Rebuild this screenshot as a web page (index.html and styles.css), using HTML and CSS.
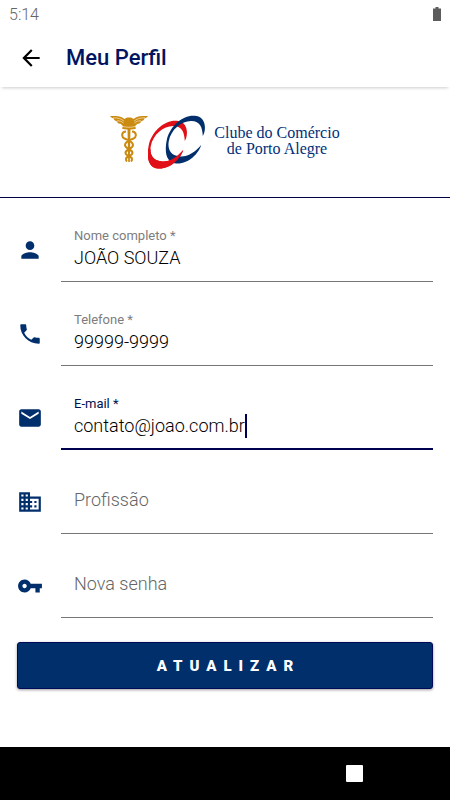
FILE: index.html
```html
<!DOCTYPE html>
<html lang="pt-BR">
<head>
<meta charset="utf-8">
<meta name="viewport" content="width=device-width, initial-scale=1">
<title>Meu Perfil</title>
<link rel="stylesheet" href="styles.css">
</head>
<body>
<div class="status-bar">
  <span>5:14</span>
  <svg class="battery" viewBox="0 0 8 14" aria-hidden="true"><path d="M2.5 0h3v1.5H8V14H0V1.5h2.5z"/></svg>
</div>
<header class="app-bar">
  <button class="back" type="button" aria-label="Voltar">
    <svg class="icon" viewBox="0 0 24 24"><path d="M20 11H7.83l5.59-5.59L12 4l-8 8 8 8 1.41-1.41L7.83 13H20v-2z"/></svg>
  </button>
  <h1>Meu Perfil</h1>
</header>
<main>
  <div class="brand">
    <svg class="caduceus" viewBox="0 0 38 46" aria-hidden="true">
      <path d="M0 0c5-.2 11-.2 14.500 3C16 1.800 17 1.500 19 1.500s3 .3 4.500 1.500C27-.2 33-.2 38 0c-1 1.500-2.500 2.200-4 2.500.5.600.2 1.200-.6 1.800-.9.700-1.800.9-2.600 1.200.2 1-.5 1.600-1.400 2-.9.400-1.800.4-2.600.5-.2 1-1 1.600-1.800 1.900l1 2.600c-2 1.400-12 1.400-14 0l1-2.600c-.8-.3-1.600-.9-1.800-1.900-.8-.1-1.700-.1-2.600-.5-.9-.4-1.600-1-1.400-2-.8-.3-1.700-.5-2.600-1.200C3.800 3.700 3.500 3.100 4 2.500 2.500 2.200 1 1.500 0 0z"/>
      <path class="wing-line" d="M3 1.800c5 .1 8.500.9 11 3.500M7 4.800c3-.1 4.500.6 6.500 2.200M35 1.800c-5 .1-8.500.9-11 3.500M31 4.800c-3-.1-4.500.6-6.500 2.200M13 10.500c3 1 9 1 12 0"/>
      <path d="M17.500 12h3l-.7 34h-1.600z"/>
      <path class="snake" d="M16 15.500c-4.500 0-5 5.500-1.500 7 4 1.500 8.500 3 8.500 6.500 0 4-7.500 4-7.500 8 0 3 6.500 3 6.500 6 0 1-.5 2-1 2.500M22 15.500c4.500 0 5 5.500 1.500 7-4 1.500-8.500 3-8.500 6.500 0 4 7.500 4 7.500 8 0 3-6.500 3-6.500 6 0 1 .5 2 1 2.500"/>
    </svg>
    <svg class="rings" viewBox="0 0 58 54" aria-hidden="true">
      <defs>
        <path id="ring" d="M36.800 26C40.500 20 40 7.500 30.500 6 19 3.500 5.500 14 1.200 28-2 42 0 52.500 10 53.500 22 54.500 32.500 44 35.200 35 29 42 22 46.800 14.500 46.500 4.500 46 1.500 39 2.700 31.500 5 19 16 10.700 25.500 11c8.500.2 10.800 6 11.300 15z"/>
        <clipPath id="front"><rect x="0" y="34" width="58" height="20"/></clipPath>
      </defs>
      <use class="red" href="#ring"/>
      <use class="blue" href="#ring" x="18" y="-5"/>
      <use class="red" href="#ring" clip-path="url(#front)"/>
    </svg>
    <p class="brand-name">Clube do Comércio<br>de Porto Alegre</p>
  </div>
  <form class="profile">
    <div class="row">
      <svg class="icon" viewBox="0 0 24 24" aria-hidden="true"><path d="M12 12c2.210 0 4-1.790 4-4s-1.790-4-4-4-4 1.790-4 4 1.790 4 4 4zm0 2c-2.670 0-8 1.340-8 4v2h16v-2c0-2.660-5.330-4-8-4z"/></svg>
      <div class="field">
        <label for="nome">Nome completo *</label>
        <input id="nome" type="text" value="JOÃO SOUZA">
      </div>
    </div>
    <div class="row">
      <svg class="icon" viewBox="0 0 24 24" aria-hidden="true"><path d="M6.620 10.790c1.440 2.830 3.760 5.140 6.590 6.590l2.200-2.200c.27-.27.67-.36 1.020-.24 1.120.37 2.330.57 3.570.57.550 0 1 .45 1 1V20c0 .55-.45 1-1 1-9.390 0-17-7.610-17-17 0-.55.45-1 1-1h3.500c.55 0 1 .45 1 1 0 1.250.2 2.450.57 3.570.11.35.03.74-.25 1.020l-2.200 2.200z"/></svg>
      <div class="field">
        <label for="telefone">Telefone *</label>
        <input id="telefone" type="tel" value="99999-9999">
      </div>
    </div>
    <div class="row">
      <svg class="icon" viewBox="0 0 24 24" aria-hidden="true"><path d="M20 4H4c-1.100 0-1.990.9-1.990 2L2 18c0 1.100.9 2 2 2h16c1.100 0 2-.9 2-2V6c0-1.100-.9-2-2-2zm0 4l-8 5-8-5V6l8 5 8-5v2z"/></svg>
      <div class="field active">
        <label for="email">E-mail *</label>
        <div class="editing">
          <input id="email" type="text" inputmode="email" value="contato@joao.com.br">
          <span class="caret"></span>
        </div>
      </div>
    </div>
    <div class="row">
      <svg class="icon" viewBox="0 0 24 24" aria-hidden="true"><path d="M12 7V3H2v18h20V7H12zM6 19H4v-2h2v2zm0-4H4v-2h2v2zm0-4H4V9h2v2zm0-4H4V5h2v2zm4 12H8v-2h2v2zm0-4H8v-2h2v2zm0-4H8V9h2v2zm0-4H8V5h2v2zm10 12h-8v-2h2v-2h-2v-2h2v-2h-2V9h8v10zm-2-8h-2v2h2v-2zm0 4h-2v2h2v-2z"/></svg>
      <div class="field empty">
        <label for="profissao">Profissão</label>
        <input id="profissao" type="text">
      </div>
    </div>
    <div class="row">
      <svg class="icon" viewBox="0 0 24 24" aria-hidden="true"><path d="M12.650 10C11.830 7.670 9.610 6 7 6c-3.310 0-6 2.690-6 6s2.690 6 6 6c2.610 0 4.830-1.670 5.650-4H17v4h4v-4h2v-4H12.650zM7 14c-1.100 0-2-.9-2-2s.9-2 2-2 2 .9 2 2-.9 2-2 2z"/></svg>
      <div class="field empty">
        <label for="senha">Nova senha</label>
        <input id="senha" type="password">
      </div>
    </div>
    <button class="submit" type="button">ATUALIZAR</button>
  </form>
</main>
<nav class="system-nav">
  <button class="recents" type="button" aria-label="Aplicativos recentes"></button>
</nav>
</body>
</html>
```
FILE: styles.css
```css
* {
  box-sizing: border-box;
}

body {
  margin: 0;
  min-height: 100vh;
  display: flex;
  flex-direction: column;
  background: #fff;
  color: #000;
  font-family: Roboto, "Liberation Sans", sans-serif;
}

button {
  border: 0;
  padding: 0;
  font: inherit;
}

.icon {
  display: block;
  width: 26px;
  height: 26px;
  flex: none;
  fill: #002f6c;
}

.status-bar {
  display: flex;
  align-items: center;
  justify-content: space-between;
  height: 28px;
  padding: 0 9px;
  color: #666;
  font-size: 16px;
  font-weight: 300;
}

.battery {
  width: 8px;
  height: 14px;
  fill: #5c5c5c;
}

.app-bar {
  display: flex;
  align-items: center;
  gap: 22px;
  height: 59px;
  padding: 0 18px;
  box-shadow: 0 3px 3px -2px rgba(0, 0, 0, 0.2);
}

.back {
  background: none;
}

.back .icon {
  fill: #000;
}

.app-bar h1 {
  margin: 0;
  color: #00145f;
  font-size: 22px;
  font-weight: 500;
}

.brand {
  display: flex;
  align-items: flex-start;
  justify-content: center;
  height: 111px;
  padding-top: 28px;
  border-bottom: 1px solid #000046;
}

.caduceus {
  width: 38px;
  height: 46px;
  margin-top: 1px;
  fill: #cb8a10;
}

.wing-line {
  fill: none;
  stroke: #f3dcae;
  stroke-width: 0.8;
}

.snake {
  fill: none;
  stroke: #cb8a10;
  stroke-width: 2;
}

.rings {
  width: 58px;
  height: 54px;
}

.red {
  fill: #e00f18;
}

.blue {
  fill: #002f6c;
}

.brand-name {
  margin: 10px 0 0 8px;
  color: #00307a;
  font-family: "Liberation Serif", serif;
  font-size: 16px;
  line-height: 16px;
  text-align: center;
}

.profile {
  padding: 0 17px 16px;
}

.row {
  display: flex;
  align-items: flex-start;
  gap: 18px;
}

.row .icon {
  margin-top: 39px;
}

.field {
  flex: 1;
  min-width: 0;
  height: 84px;
  padding: 30px 13px 0;
  border-bottom: 1px solid #777;
}

.field label {
  display: block;
  height: 18px;
  color: #7d7d7d;
  font-size: 13px;
  line-height: 16px;
}

.field input {
  display: block;
  width: 100%;
  height: 24px;
  padding: 0;
  border: 0;
  outline: 0;
  background: none;
  color: #000;
  font: inherit;
  font-size: 18px;
  font-weight: 300;
  line-height: 24px;
}

.field.active {
  border-bottom: 2px solid #000050;
}

.field.active label {
  color: #00104f;
}

.editing {
  display: flex;
}

.editing input {
  width: auto;
  field-sizing: content;
}

.caret {
  width: 2px;
  height: 24px;
  background: #000050;
}

.field.empty {
  display: grid;
  align-items: center;
  padding: 16px 13px 0;
}

.field.empty label,
.field.empty input {
  grid-area: 1 / 1;
}

.field.empty label {
  height: 24px;
  color: #666;
  font-size: 18px;
  font-weight: 300;
  line-height: 24px;
}

.submit {
  display: block;
  width: 100%;
  height: 47px;
  margin-top: 24px;
  padding-left: 7px;
  border: 1px solid #000a5a;
  border-radius: 3px;
  background: #002f6c;
  box-shadow: 0 1px 3px rgba(0, 0, 0, 0.4);
  color: #fff;
  font-size: 15px;
  font-weight: 900;
  letter-spacing: 7px;
}

.system-nav {
  display: flex;
  justify-content: flex-end;
  height: 53px;
  margin-top: auto;
  padding: 18px 87px 0;
  background: #000;
}

.recents {
  width: 17px;
  height: 17px;
  border-radius: 1px;
  background: #fff;
}
```
